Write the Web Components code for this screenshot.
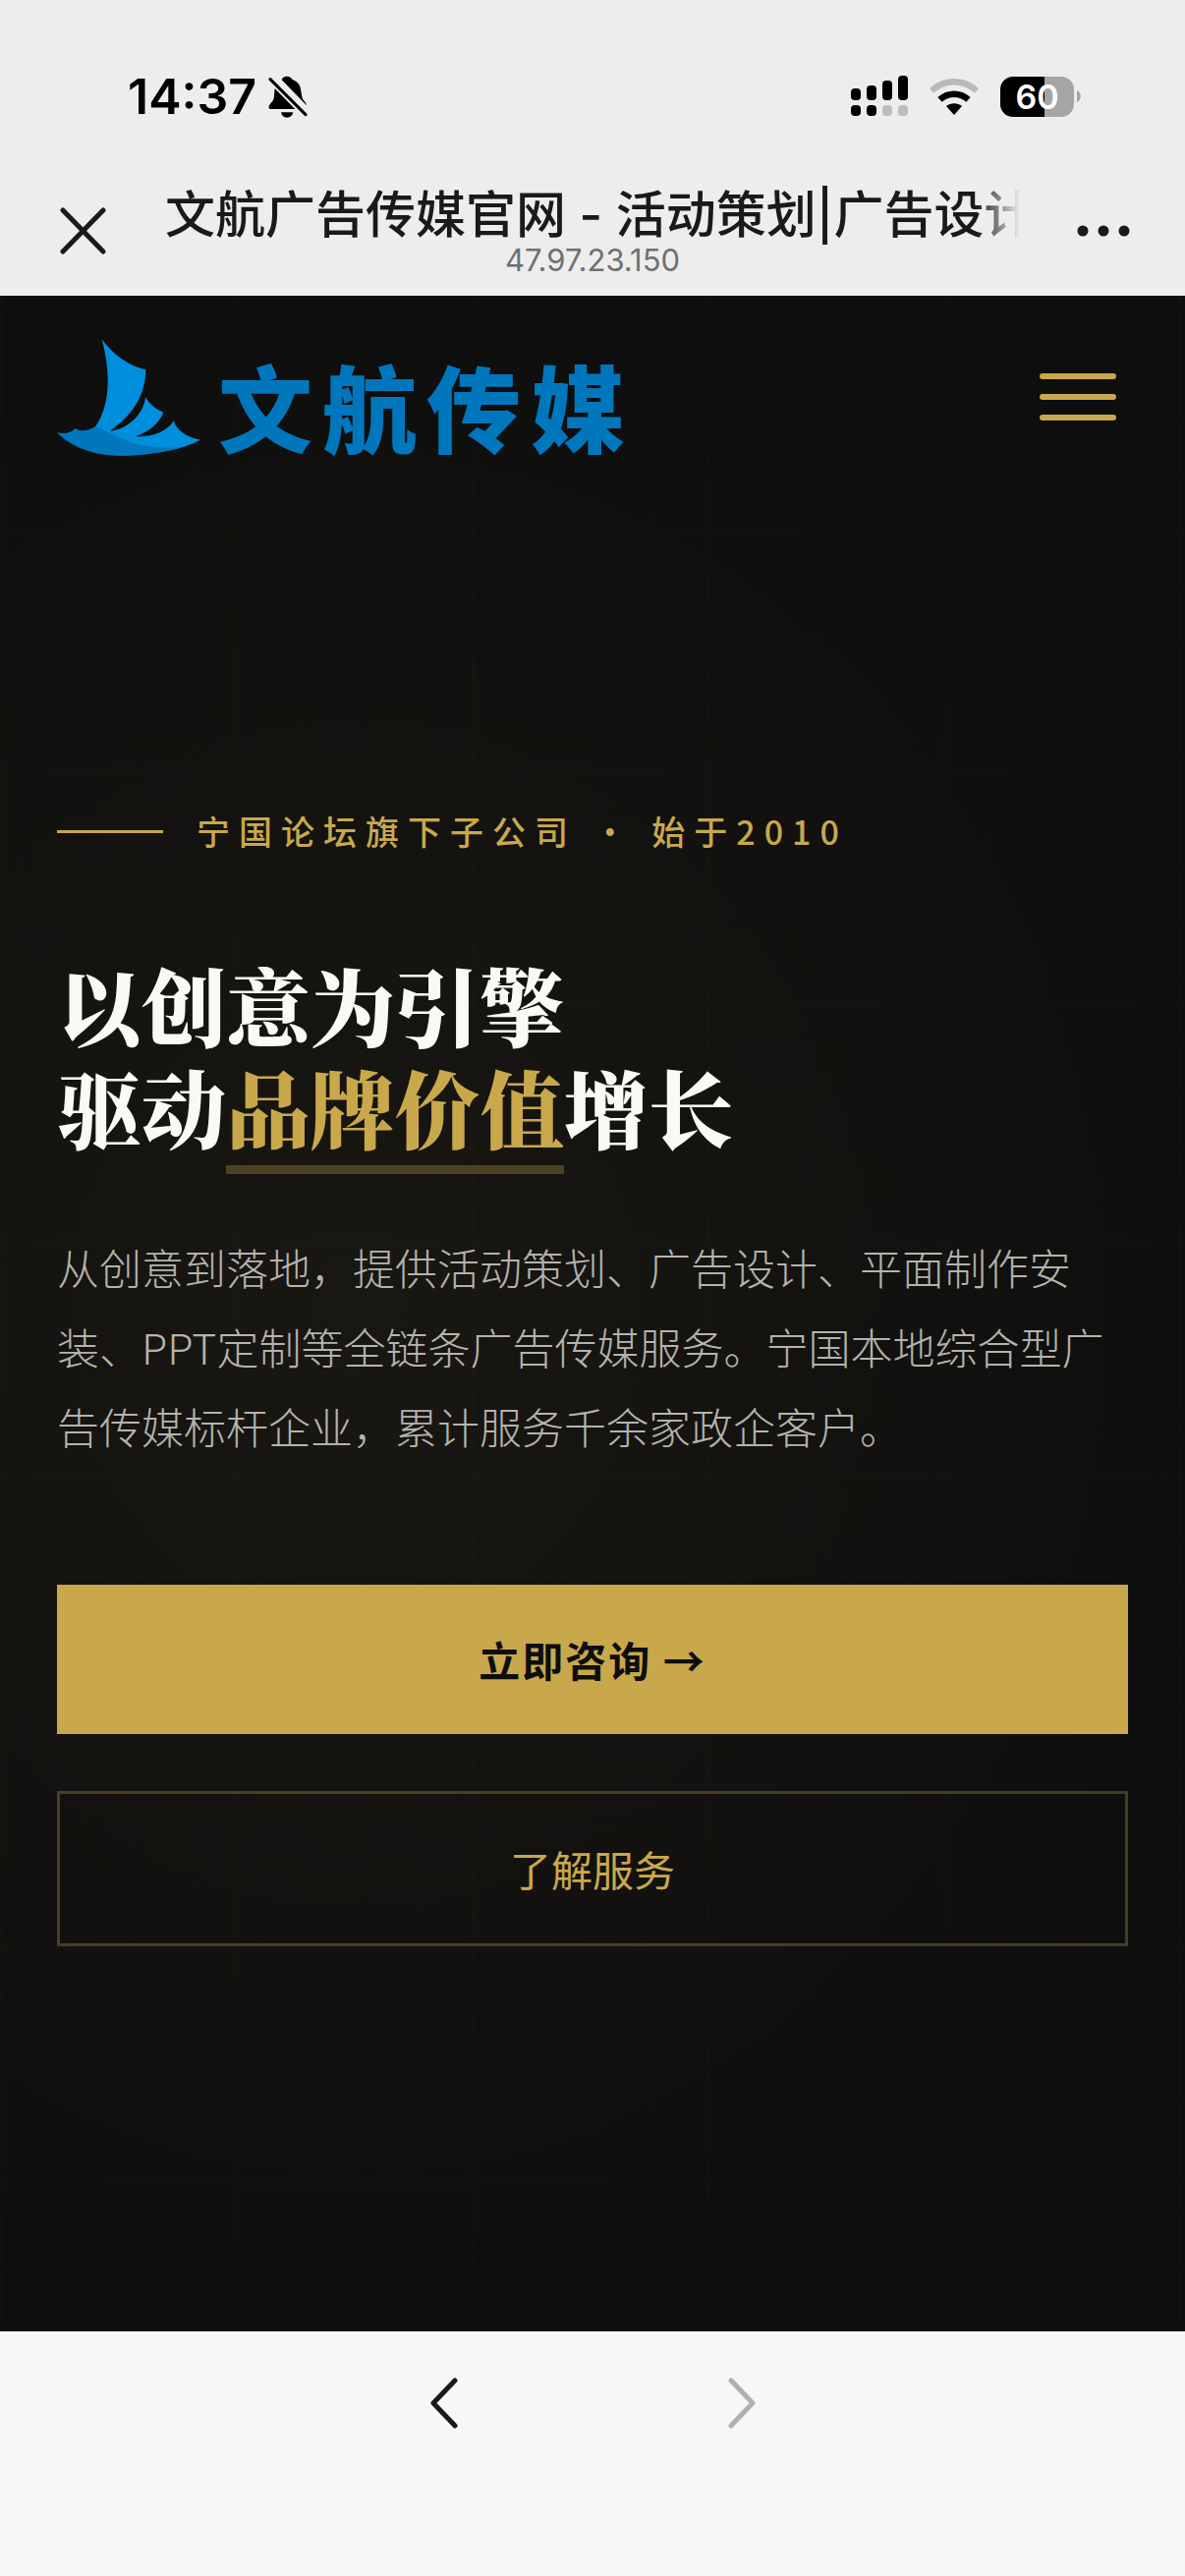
<!DOCTYPE html>
<html lang="zh-CN">
<head>
<meta charset="utf-8">
<meta name="viewport" content="width=device-width, initial-scale=1">
<title>文航广告传媒官网 - 活动策划|广告设计</title>
<style>
    :root {
        --gold: #c9a84c;
        --gold-dim: rgba(201, 168, 76, .3);
        --ink: #0e0e0e;
        --chrome: #ededed;
        --sans: "Noto Sans CJK SC", sans-serif;
        --serif: "Noto Serif CJK SC", "Noto Serif SC", "Noto Sans CJK SC", serif;
        --system: Inter, "Noto Sans CJK SC", sans-serif;
    }
    body {
        display: flex;
        flex-direction: column;
        min-height: 100vh;
        margin: 0;
        background: #f7f7f7;
        font-family: var(--sans);
    }
    site-page {
        flex: 1;
    }
</style>
</head>
<body>

<phone-status time="14:37" battery="60"></phone-status>
<title-bar>
    文航广告传媒官网 - 活动策划|广告设计
    <span slot="host">47.97.23.150</span>
</title-bar>
<site-page>
    <site-nav slot="nav">文航传媒</site-nav>
    <hero-section>
        <span slot="eyebrow">宁国论坛旗下子公司 · 始于2010</span>
        <span slot="title">以创意为引擎<br>驱动<hero-mark>品牌价值</hero-mark>增长</span>
        <span slot="text">从创意到落地，提供活动策划、广告设计、平面制作安装、PPT定制等全链条广告传媒服务。宁国本地综合型广告传媒标杆企业，累计服务千余家政企客户。</span>
        <cta-link slot="actions" href="#contact">立即咨询 →</cta-link>
        <cta-link slot="actions" href="#services" outline>了解服务</cta-link>
    </hero-section>
</site-page>
<browser-toolbar></browser-toolbar>

<template id="phone_status_tpl">
    <style>
        :host {
            display: flex;
            align-items: center;
            height: 60px;
            padding: 68px 106px 41px 130px;
            background: var(--chrome);
            color: #000;
            font-family: var(--system);
        }
        .time {
            font-size: 50px;
            line-height: 60px;
            font-weight: 600;
        }
        .bell {
            margin-left: 12px;
        }
        .icons {
            display: flex;
            align-items: center;
            gap: 22px;
            margin-left: auto;
        }
        .battery {
            display: flex;
            align-items: center;
            gap: 3px;
        }
        .cell {
            width: 75px;
            height: 41px;
            border-radius: 13px;
            background: linear-gradient(to right, #000 60%, #a5a5a5 60%);
            color: #fff;
            font-size: 34px;
            line-height: 41px;
            font-weight: 600;
            text-align: center;
        }
        svg {
            display: block;
        }
    </style>
    <span class="time"></span>
    <svg class="bell" width="40" height="43" viewBox="41 35 120 129">
        <path d="M98 37 C90 37 84 41 82 48 L158 126 C158 121 152 114 147 108 C143 100 142 82 138 68 C134 56 124 50 114 46 C111 40 105 37 98 37 Z"/>
        <path d="M61 74 L123 137 L50 137 C42 137 41 129 45 124 C50 117 56 113 58 104 C60 94 59 84 61 74 Z"/>
        <path d="M80 147 L117 147 C115 158 108 163 98 163 C89 163 82 158 80 147 Z"/>
        <path d="M47 46 L155 154" fill="none" stroke="#000" stroke-width="9" stroke-linecap="round"/>
    </svg>
    <div class="icons">
        <svg width="58" height="42" viewBox="0 0 58 42">
            <rect x="0" y="13" width="10" height="12" rx="4"/>
            <rect x="16" y="10" width="10" height="15" rx="4"/>
            <rect x="32" y="5" width="10" height="20" rx="4"/>
            <rect x="48" y="0" width="10" height="25" rx="4"/>
            <rect x="0" y="30" width="10" height="11" rx="4"/>
            <rect x="16" y="30" width="10" height="11" rx="4"/>
            <rect x="32" y="30" width="10" height="11" rx="4" fill="#bdbdbd"/>
            <rect x="48" y="30" width="10" height="11" rx="4" fill="#bdbdbd"/>
        </svg>
        <svg width="50" height="37" viewBox="287 42 150 111">
            <path d="M287 73 C328 32 396 32 437 73 L424 86 C390 53 334 53 300 86 Z" fill="#b9b9b9"/>
            <path d="M312 99 C340 73 384 73 412 99 L399 113 C378 94 346 94 325 113 Z"/>
            <path d="M338 126 C352 115 372 115 386 126 L362 153 Z"/>
        </svg>
        <div class="battery">
            <span class="cell"></span>
            <svg width="4" height="12" viewBox="0 0 4 12"><path d="M0 0 C5 2 5 10 0 12 Z" fill="#a5a5a5"/></svg>
        </div>
    </div>
</template>

<template id="title_bar_tpl">
    <style>
        :host {
            display: grid;
            grid-template-columns: 108px minmax(0, 1fr) 108px;
            align-items: center;
            height: 132px;
            padding: 0 30px;
            background: var(--chrome);
            color: #1a1a1a;
            font-family: var(--system);
            box-sizing: border-box;
        }
        button {
            display: flex;
            align-items: center;
            height: 88px;
            padding: 0 26px;
            border: 0;
            background: none;
        }
        .more {
            justify-content: flex-end;
        }
        .titles {
            padding: 0 30px;
            text-align: center;
            white-space: nowrap;
        }
        .title {
            overflow: hidden;
            font-size: 51px;
            line-height: 60px;
            font-weight: 500;
            text-align: left;
            -webkit-mask-image: linear-gradient(to left, transparent, #000 44px);
            mask-image: linear-gradient(to left, transparent, #000 44px);
        }
        .host {
            color: #707070;
            font-size: 31px;
            line-height: 32px;
        }
        svg {
            flex: none;
        }
    </style>
    <button type="button" aria-label="关闭">
        <svg width="54" height="48" viewBox="0 0 54 48"><path d="M8 3 L49 45 M49 3 L8 45" stroke="#1a1a1a" stroke-width="5" stroke-linecap="round"/></svg>
    </button>
    <div class="titles">
        <div class="title"><slot></slot></div>
        <div class="host"><slot name="host"></slot></div>
    </div>
    <button type="button" class="more" aria-label="更多">
        <svg width="54" height="12" viewBox="0 0 54 12" fill="#1a1a1a"><circle cx="6" cy="6" r="5.5"/><circle cx="27" cy="6" r="5.5"/><circle cx="48" cy="6" r="5.5"/></svg>
    </button>
</template>

<template id="site_page_tpl">
    <style>
        :host {
            display: block;
            /* faint 240px grid over a warm glow */
            background:
                linear-gradient(rgba(201, 168, 76, .01) 3px, transparent 3px) 0 0 / 240px 240px,
                linear-gradient(to right, rgba(201, 168, 76, .01) 3px, transparent 3px) 0 0 / 240px 240px,
                radial-gradient(ellipse 75% 50% at 30% 50%, rgba(201, 168, 76, .06), transparent),
                var(--ink);
        }
    </style>
    <slot name="nav"></slot>
    <slot></slot>
</template>

<template id="site_nav_tpl">
    <style>
        :host {
            display: flex;
            align-items: center;
            justify-content: space-between;
            padding: 43px 58px 45px;
        }
        a {
            display: flex;
            align-items: center;
            gap: 18px;
            color: #0077bd;
            font-size: 96px;
            line-height: 104px;
            font-weight: 900;
            letter-spacing: 10px;
            text-decoration: none;
        }
        svg {
            display: block;
        }
        span {
            padding-top: 16px;
        }
        button {
            display: grid;
            gap: 15px;
            padding: 12px;
            border: 0;
            background: none;
        }
        i {
            width: 78px;
            height: 6px;
            border-radius: 3px;
            background: var(--gold);
        }
    </style>
    <a href="#home">
        <svg width="146" height="119" viewBox="27 30 438 357" aria-hidden="true">
            <path fill="#008fdc" d="M164 31 C196 77 246 113 298 124 C297 193 268 256 189 311 C243 307 293 258 297 207 C307 226 327 244 352 254 C339 289 305 314 266 328 C321 331 365 311 383 280 C392 308 424 332 465 338 C424 359 376 371 328 378 L140 304 C180 252 199 162 164 31 Z"/>
            <path fill="#0077bd" d="M27 316 C49 320 70 318 83 303 C97 314 121 311 141 299 C194 305 223 357 362 362 C394 363 424 357 447 347 C392 368 308 387 221 387 C137 387 72 360 27 316 Z"/>
        </svg>
        <span><slot></slot></span>
    </a>
    <button type="button" aria-label="菜单"><i></i><i></i><i></i></button>
</template>

<template id="hero_section_tpl">
    <style>
        :host {
            display: block;
            padding: 312px 58px 390px;
        }
        .eyebrow {
            display: flex;
            align-items: center;
            gap: 34px;
            margin: 0 0 99px;
            color: var(--gold);
            font-size: 34px;
            line-height: 50px;
            font-weight: 500;
            letter-spacing: 9px;
        }
        .eyebrow::before {
            content: "";
            width: 108px;
            height: 3px;
            background: var(--gold);
        }
        h1 {
            margin: 0 0 71px;
            color: #faf9f6;
            font-family: var(--serif);
            font-size: 86px;
            line-height: 104px;
            font-weight: 900;
        }
        p {
            margin: 0;
        }
        .text {
            color: #b5b3ae;
            font-size: 43px;
            line-height: 81px;
            font-weight: 300;
        }
        .actions {
            display: grid;
            gap: 58px;
            margin-top: 121px;
        }
    </style>
    <p class="eyebrow"><slot name="eyebrow"></slot></p>
    <h1><slot name="title"></slot></h1>
    <p class="text"><slot name="text"></slot></p>
    <div class="actions"><slot name="actions"></slot></div>
</template>

<template id="hero_mark_tpl">
    <style>
        :host {
            display: inline-block;
            position: relative;
            color: var(--gold);
        }
        :host::after {
            content: "";
            position: absolute;
            left: 0;
            right: 0;
            bottom: -17px;
            height: 9px;
            background: var(--gold-dim);
        }
    </style>
    <slot></slot>
</template>

<template id="cta_link_tpl">
    <style>
        :host {
            display: block;
        }
        a {
            display: block;
            padding: 46px 0;
            background: var(--gold);
            color: var(--ink);
            font-size: 42px;
            line-height: 60px;
            font-weight: 700;
            letter-spacing: 2px;
            text-align: center;
            text-decoration: none;
        }
        :host([outline]) a {
            border: 3px solid var(--gold-dim);
            background: none;
            color: var(--gold);
            font-weight: 400;
            letter-spacing: 0;
        }
    </style>
    <a><slot></slot></a>
</template>

<template id="browser_toolbar_tpl">
    <style>
        :host {
            display: flex;
            justify-content: center;
            gap: 246px;
            padding: 44px 0 148px;
            background: #f7f7f7;
        }
        button {
            display: flex;
            justify-content: center;
            width: 57px;
            padding: 0;
            border: 0;
            background: none;
            color: #1a1a1a;
        }
        button:disabled {
            color: #b0b0b0;
        }
    </style>
    <button type="button" aria-label="后退">
        <svg width="28" height="57" viewBox="0 0 28 57" fill="none" stroke="currentColor" stroke-width="5" stroke-linecap="round" stroke-linejoin="round"><path d="M25 6 L3 29 L25 52"/></svg>
    </button>
    <button type="button" aria-label="前进" disabled>
        <svg width="28" height="57" viewBox="0 0 28 57" fill="none" stroke="currentColor" stroke-width="5" stroke-linecap="round" stroke-linejoin="round"><path d="M3 6 L25 29 L3 52"/></svg>
    </button>
</template>

<script>
    class TemplateElement extends HTMLElement {
        constructor() {
            super();
            this.attachShadow({mode: 'open'});
            const tpl = document.getElementById(this.localName.replace('-', '_') + '_tpl');
            this.shadowRoot.appendChild(tpl.content.cloneNode(true));
        }
    }

    class PhoneStatus extends TemplateElement {
        connectedCallback() {
            const battery = this.getAttribute('battery');
            this.shadowRoot.querySelector('.time').textContent = this.getAttribute('time');
            this.shadowRoot.querySelector('.cell').textContent = battery;
        }
    }

    class CtaLink extends TemplateElement {
        connectedCallback() {
            this.shadowRoot.querySelector('a').href = this.getAttribute('href');
        }
    }

    customElements.define('phone-status', PhoneStatus);
    customElements.define('title-bar', class extends TemplateElement {});
    customElements.define('site-page', class extends TemplateElement {});
    customElements.define('site-nav', class extends TemplateElement {});
    customElements.define('hero-section', class extends TemplateElement {});
    customElements.define('hero-mark', class extends TemplateElement {});
    customElements.define('cta-link', CtaLink);
    customElements.define('browser-toolbar', class extends TemplateElement {});
</script>
</body>
</html>
